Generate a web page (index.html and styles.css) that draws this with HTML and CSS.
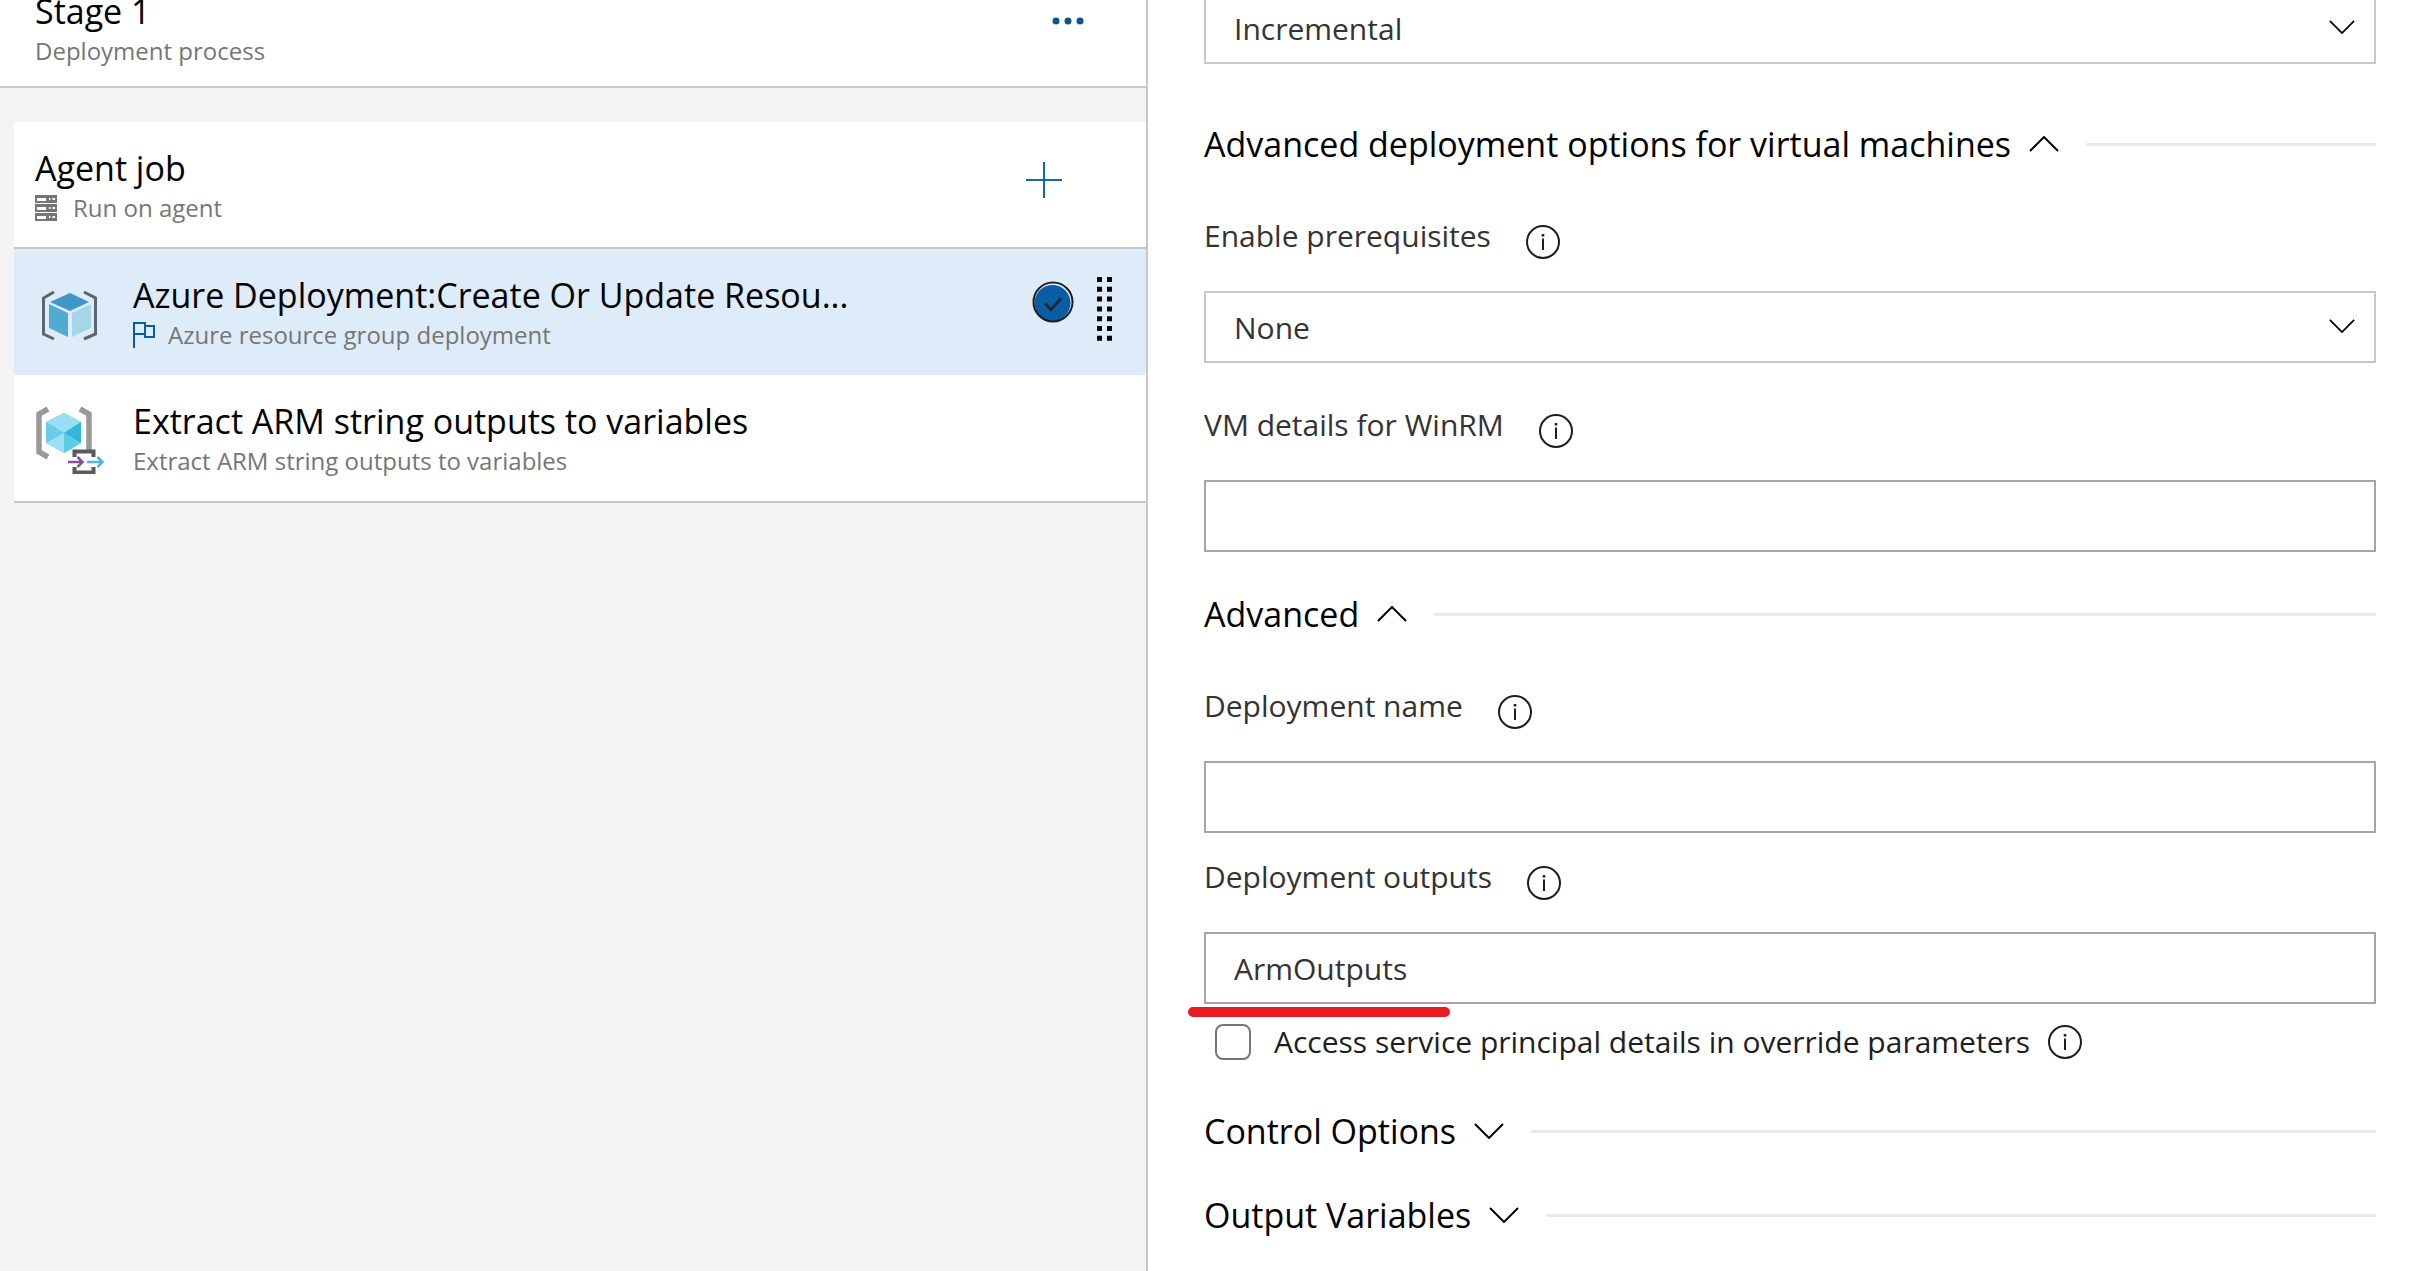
FILE: index.html
```html
<!DOCTYPE html>
<html lang="en">
<head>
<meta charset="utf-8">
<title>Stage 1 - Deployment process</title>
<link rel="stylesheet" href="styles.css">
</head>
<body>
<svg class="sprite" aria-hidden="true">
  <symbol id="info" viewBox="0 0 34 34">
    <circle cx="17" cy="17" r="16" fill="none" stroke="currentColor" stroke-width="2"/>
    <path d="M16 13.500h2V25h-2zM15.700 9h2.600v2.500h-2.600z" fill="currentColor"/>
  </symbol>
  <symbol id="chevron" viewBox="0 0 30 16">
    <path d="M1 1l14 14L29 1" fill="none" stroke="currentColor" stroke-width="2"/>
  </symbol>
</svg>
<div class="layout">
  <section class="process" aria-label="Deployment process">
    <header class="stage">
      <div class="text">
        <h1 class="title">Stage 1</h1>
        <p class="subtitle">Deployment process</p>
      </div>
      <button class="icon-button more" aria-label="More actions">
        <svg width="32" height="8" viewBox="0 0 32 8"><g fill="#0b5495"><circle cx="4" cy="4" r="3.500"/><circle cx="16" cy="4" r="3.500"/><circle cx="28" cy="4" r="3.500"/></g></svg>
      </button>
    </header>
    <div class="jobs">
      <div class="row job">
        <div class="text">
          <h2 class="title">Agent job</h2>
          <p class="subtitle with-icon">
            <svg width="22" height="26" viewBox="0 0 22 26" aria-hidden="true"><path fill="#767676" fill-rule="evenodd" d="M0 0h22v8H0zM2 3v3h9V3zM14 3v2h1.500V3zM17.500 3v2H20V3zM0 9h22v8H0zM2 12v3h9v-3zM14 12v2h1.500v-2zM17.500 12v2H20v-2zM0 18h22v8H0zM2 21v3h9v-3zM14 21v2h1.500v-2zM17.500 21v2H20v-2z"/></svg>
            Run on agent
          </p>
        </div>
        <button class="icon-button add" aria-label="Add a task">
          <svg width="36" height="36" viewBox="0 0 36 36"><path d="M18 0v36M0 18h36" stroke="#1467a8" stroke-width="2"/></svg>
        </button>
      </div>
      <div class="row selected">
        <svg class="task-icon" width="70" height="72" viewBox="0 0 70 72" aria-hidden="true">
          <path d="M19 16L8.500 22v36L19 63M49 16l11.500 6v36L49 63" fill="none" stroke="#5d666e" stroke-width="3"/>
          <path d="M35 17l19 9-19 9-20-9z" fill="#3f97c5"/>
          <path d="M14 28l19 9v24l-19-9z" fill="#50abd0"/>
          <path d="M56 28l-19 9v24l19-9z" fill="#a3d6e9"/>
        </svg>
        <div class="text">
          <h3 class="title">Azure Deployment:Create Or Update Resou...</h3>
          <p class="subtitle flagged">
            <svg width="22" height="26" viewBox="0 0 22 26" aria-hidden="true"><path d="M1 26V1h11v11H1M12 4h9v11h-9z" fill="none" stroke="#0b5ca3" stroke-width="2"/></svg>
            Azure resource group deployment
          </p>
        </div>
        <div class="row-actions">
          <svg class="check" width="42" height="42" viewBox="0 0 42 42" role="img" aria-label="Selected">
            <circle cx="21" cy="21" r="19.500" fill="#e9f4fc"/>
            <circle cx="20.500" cy="22" r="18" fill="#0a5ca4"/>
            <circle cx="21" cy="21" r="19.500" fill="none" stroke="#1b1f24" stroke-width="2"/>
            <path d="M13 22.500l6 6L29 17.500" fill="none" stroke="#1d2b38" stroke-width="3"/>
          </svg>
          <button class="icon-button" aria-label="Drag to reorder">
            <svg width="15" height="64" viewBox="0 0 15 64"><path d="M2.500 0v64M12.500 0v64" stroke="#000" stroke-width="5" stroke-dasharray="5 4.800"/></svg>
          </button>
        </div>
      </div>
      <div class="row">
        <svg class="task-icon" width="70" height="72" viewBox="0 0 70 72" aria-hidden="true">
          <path d="M13 7L4 12v38l9 5" fill="none" stroke="#999" stroke-width="5.500"/>
          <path d="M45 7l9 5v36" fill="none" stroke="#999" stroke-width="5.500"/>
          <path d="M29 11l17 9v21L29 51 11 41V20z" fill="#61c9e6"/>
          <path d="M29 11l17 9-17 11-18-11z" fill="#97dff2"/>
          <path d="M11 20l18 11-18 10z" fill="#6ccdea"/>
          <path d="M46 20L29 31l17 10z" fill="#32b7d7"/>
          <path d="M29 31L11 41l18 10z" fill="#9ce0f3"/>
          <path d="M29 31l17 10-17 10z" fill="#5ccbe6"/>
          <path d="M38 48h22v24H38z" fill="#fff"/>
          <path d="M39.500 55v-5.500h19V55M39.500 65v5.500h19V65" fill="none" stroke="#5a5a5a" stroke-width="4"/>
          <path d="M33 60h14M42.500 55l5 5-5 5" fill="none" stroke="#8a4ba0" stroke-width="2.500"/>
          <path d="M52 60h15M62.500 55l5 5-5 5" fill="none" stroke="#58b3dc" stroke-width="2.500"/>
        </svg>
        <div class="text">
          <h3 class="title">Extract ARM string outputs to variables</h3>
          <p class="subtitle">Extract ARM string outputs to variables</p>
        </div>
      </div>
    </div>
  </section>

  <form class="details">
    <div class="select-box">
      <select class="control" aria-label="Deployment mode"><option>Incremental</option></select>
      <svg class="arrow" width="26" height="14"><use href="#chevron"/></svg>
    </div>

    <button type="button" class="section first">Advanced deployment options for virtual machines<svg class="up" width="30" height="16"><use href="#chevron"/></svg></button>

    <div class="field">
      <div class="label-row"><label for="prereq">Enable prerequisites</label><button type="button" class="icon-button info" aria-label="About prerequisites"><svg width="34" height="34"><use href="#info"/></svg></button></div>
      <div class="select-box">
        <select class="control" id="prereq"><option>None</option></select>
        <svg class="arrow" width="26" height="14"><use href="#chevron"/></svg>
      </div>
    </div>
    <div class="field spaced">
      <div class="label-row"><label for="winrm">VM details for WinRM</label><button type="button" class="icon-button info" aria-label="About VM details"><svg width="34" height="34"><use href="#info"/></svg></button></div>
      <input class="control text-input" id="winrm" type="text">
    </div>

    <button type="button" class="section advanced">Advanced<svg class="up" width="30" height="16"><use href="#chevron"/></svg></button>

    <div class="field">
      <div class="label-row"><label for="depname">Deployment name</label><button type="button" class="icon-button info" aria-label="About deployment name"><svg width="34" height="34"><use href="#info"/></svg></button></div>
      <input class="control text-input" id="depname" type="text">
    </div>
    <div class="field next">
      <div class="label-row"><label for="outputs">Deployment outputs</label><button type="button" class="icon-button info" aria-label="About deployment outputs"><svg width="34" height="34"><use href="#info"/></svg></button></div>
      <div class="marked"><input class="control text-input" id="outputs" type="text" value="ArmOutputs"></div>
    </div>

    <div class="check-row">
      <input type="checkbox" id="principal"><label for="principal">Access service principal details in override parameters</label>
      <button type="button" class="icon-button" aria-label="About service principal details"><svg width="34" height="34"><use href="#info"/></svg></button>
    </div>

    <button type="button" class="section control-options">Control Options<svg width="30" height="16"><use href="#chevron"/></svg></button>
    <button type="button" class="section">Output Variables<svg width="30" height="16"><use href="#chevron"/></svg></button>
  </form>
</div>
</body>
</html>
```

FILE: styles.css
```css
* {
  box-sizing: border-box;
}

body {
  margin: 0;
  overflow: hidden;
  background: #fff;
  font-family: "Open Sans", "Noto Sans", sans-serif;
}

h1, h2, h3, p {
  margin: 0;
  font-weight: 400;
}

svg {
  display: block;
  flex: none;
}

.sprite {
  position: absolute;
  width: 0;
  height: 0;
}

.layout {
  display: grid;
  grid-template-columns: 1148fr 1266fr;
  min-height: 100vh;
}

.icon-button {
  flex: none;
  padding: 0;
  border: 0;
  background: none;
  color: #1e1e1e;
}

/* Left pane: the stage, its job and the tasks */

.process {
  border-right: 2px solid #c8c8c8;
  background: #f3f3f3;
}

.stage {
  display: flex;
  align-items: flex-start;
  margin-top: -11px;
  padding: 0 62px 19px 35px;
  border-bottom: 2px solid #c8c8c8;
  background: #fff;
}

.more {
  margin-top: 28px;
}

.text {
  display: grid;
  flex: 1;
  gap: 2px;
  min-width: 0;
}

.title {
  overflow: hidden;
  color: #000;
  font-size: 34px;
  line-height: 44px;
  text-overflow: ellipsis;
  white-space: nowrap;
}

.subtitle {
  display: flex;
  align-items: center;
  color: #767676;
  font-size: 24px;
  line-height: 32px;
}

.with-icon {
  gap: 16px;
}

.flagged {
  gap: 13px;
}

.jobs {
  margin: 34px 0 0 14px;
  border-bottom: 2px solid #c8c8c8;
  background: #fff;
}

.row {
  display: flex;
  align-items: center;
  gap: 28px;
  padding: 24px 34px 24px 21px;
}

.job {
  padding: 24px 84px 23px 21px;
  border-bottom: 2px solid #c8c8c8;
}

.add {
  align-self: flex-start;
  margin-top: 16px;
}

.selected {
  background: #deebf8;
}

.task-icon {
  margin: 3px 0;
}

.row-actions {
  display: flex;
  align-items: flex-start;
  align-self: flex-start;
  gap: 23px;
  padding-top: 4px;
}

.check {
  margin-top: 4px;
}

/* Right pane: options of the selected task */

.details {
  min-width: 0;
  margin-top: -8px;
  padding: 0 38px 32px 56px;
}

.select-box,
.marked {
  position: relative;
}

.control {
  display: block;
  width: 100%;
  height: 72px;
  padding: 2px 28px 0;
  border: 2px solid #c8c8c8;
  border-radius: 0;
  background: #fff;
  color: #333;
  font: 400 30px/40px "Open Sans", "Noto Sans", sans-serif;
  appearance: none;
}

.text-input {
  padding-top: 0;
  border-color: #a6a6a6;
}

.arrow {
  position: absolute;
  top: 28px;
  right: 21px;
  pointer-events: none;
}

.section {
  display: flex;
  align-items: center;
  width: 100%;
  margin: 36px 0 0;
  padding: 0;
  border: 0;
  background: none;
  color: #000;
  font: 400 34px/48px "Open Sans", "Noto Sans", sans-serif;
}

.section svg {
  margin: 0 27px 0 18px;
}

.section .up {
  transform: rotate(180deg);
}

.section::after {
  flex: 1;
  height: 3px;
  background: #eaeaea;
  content: "";
}

.first {
  margin-top: 56px;
}

.advanced {
  margin-top: 38px;
}

.control-options {
  margin-top: 45px;
}

.field {
  margin-top: 48px;
}

.spaced {
  margin-top: 42px;
}

.next {
  margin-top: 24px;
}

.label-row {
  display: flex;
  align-items: flex-start;
  gap: 35px;
  margin-bottom: 32px;
  color: #333;
  font-size: 30px;
  line-height: 40px;
}

.info {
  margin-top: 9px;
}

.marked::after {
  position: absolute;
  top: 75px;
  left: -16px;
  width: 262px;
  height: 10px;
  border-radius: 5px;
  background: #e81b1f;
  content: "";
}

.check-row {
  display: flex;
  align-items: center;
  margin-top: 18px;
  padding-left: 11px;
  color: #1e1e1e;
  font-size: 30px;
  line-height: 40px;
}

.check-row input {
  width: 36px;
  height: 36px;
  margin: 0 23px 0 0;
  border: 2px solid #767676;
  border-radius: 8px;
  background: #fff;
  appearance: none;
}

.check-row .icon-button {
  margin-left: 18px;
}
```
